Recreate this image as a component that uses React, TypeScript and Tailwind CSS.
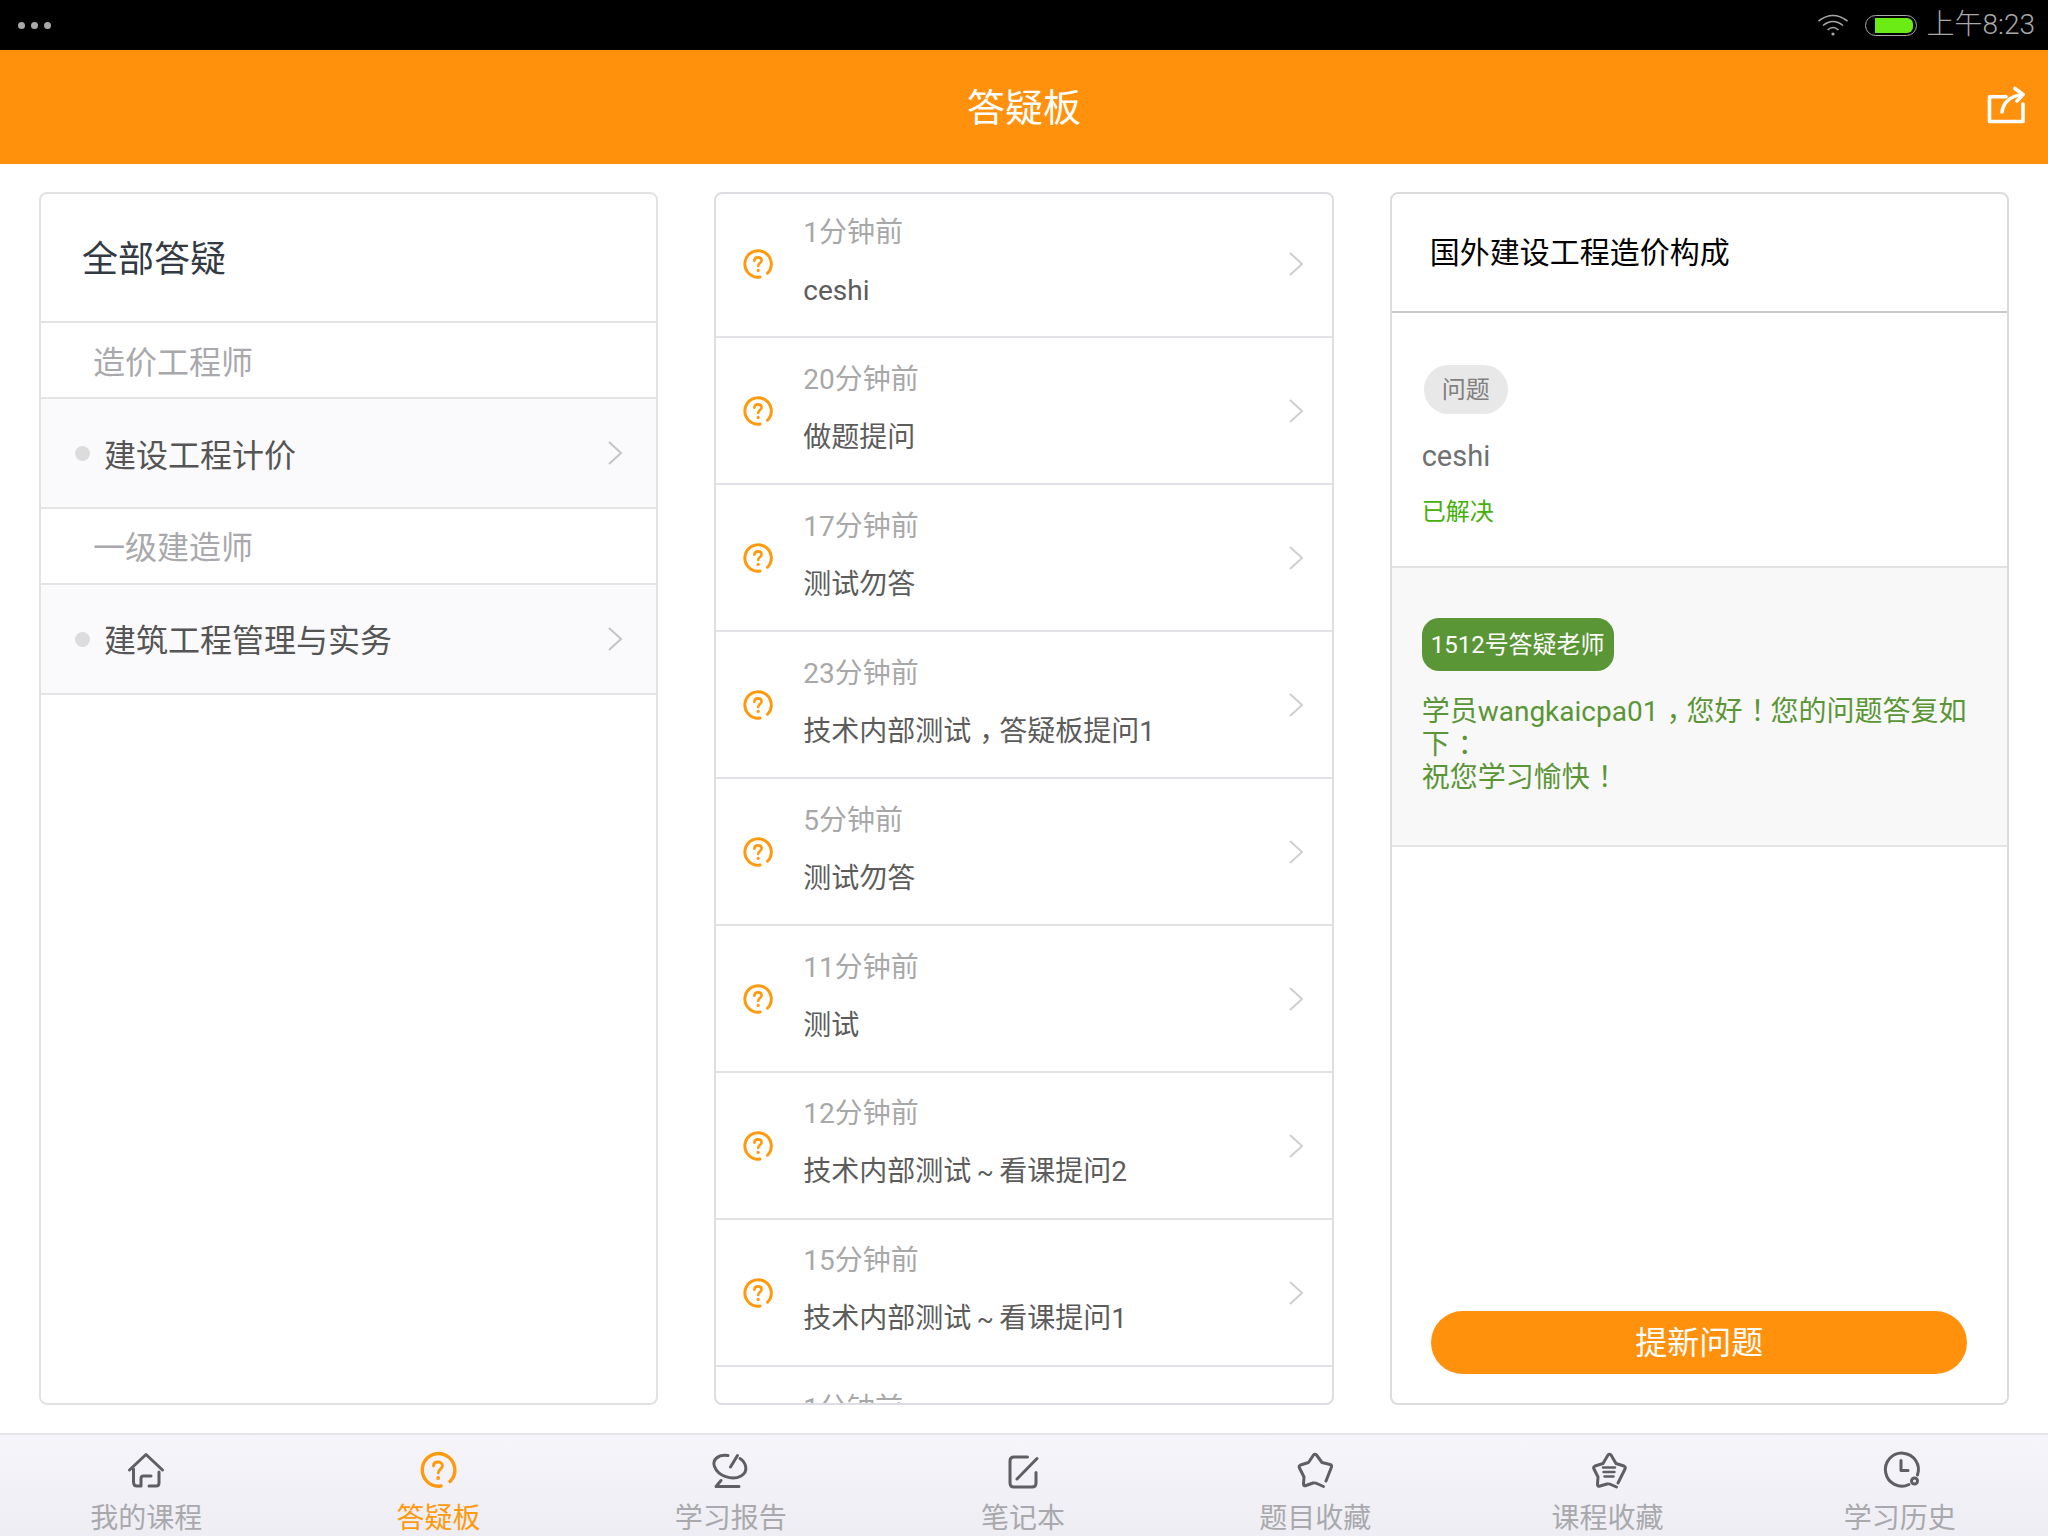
import type { ReactNode } from 'react'

const font = { fontFamily: 'Roboto, "Noto Sans CJK SC", sans-serif' }

// full-width mark centred in its em box, as the tablet's font draws it
function Mark({ children }: { children: string }) {
  return <span className="ml-[8px] tracking-[-8px]">{children}</span>
}

function Tilde() {
  return <span className="inline-block w-[28px] text-center text-[25px]">~</span>
}

const questions: { time: string; title: ReactNode }[] = [
  { time: '1分钟前', title: 'ceshi' },
  { time: '20分钟前', title: '做题提问' },
  { time: '17分钟前', title: '测试勿答' },
  { time: '23分钟前', title: <>技术内部测试<Mark>，</Mark>答疑板提问1</> },
  { time: '5分钟前', title: '测试勿答' },
  { time: '11分钟前', title: '测试' },
  { time: '12分钟前', title: <>技术内部测试<Tilde />看课提问2</> },
  { time: '15分钟前', title: <>技术内部测试<Tilde />看课提问1</> },
  { time: '1分钟前', title: '\u00a0' },
]

function Chevron({ className }: { className: string }) {
  return (
    <svg width="16" height="26" viewBox="0 0 16 26" fill="none" className={className}>
      <path d="M2 2 L14 13 L2 24" stroke="currentColor" strokeWidth="2" />
    </svg>
  )
}

function QuestionIcon({ size, stroke }: { size: number; stroke: number }) {
  return (
    <svg width={size} height={size} viewBox="0 0 30 30" fill="none" className="text-[#ff9a0e] shrink-0">
      <path
        d="M24.5 24.2 A13.2 13.2 0 1 0 17 28"
        stroke="currentColor"
        strokeWidth={stroke}
        strokeLinecap="round"
      />
      <path
        d="M11.4 11.8 C11.4 9.6 13 8.4 15 8.4 C17 8.4 18.6 9.6 18.6 11.4 C18.6 14 15.2 14.2 15.2 17"
        stroke="currentColor"
        strokeWidth="2.6"
        strokeLinecap="round"
      />
      <circle cx="15.2" cy="21.4" r="1.6" fill="currentColor" />
    </svg>
  )
}

function TabIcon({ children }: { children: ReactNode }) {
  return (
    <svg
      width="60"
      height="60"
      viewBox="0 0 60 60"
      fill="none"
      stroke="#5f5f63"
      strokeWidth="3"
      strokeLinecap="round"
      strokeLinejoin="round"
    >
      {children}
    </svg>
  )
}

const tabs: { label: string; active?: boolean; icon: ReactNode }[] = [
  {
    label: '我的课程',
    icon: (
      <TabIcon>
        <path d="M13.5 30 L30 14.5 L46.5 30" />
        <path d="M17.5 29 V42 Q17.5 46 21 46 H25 V38.5 Q25 36 27.5 36 H35" />
        <path d="M33 46 H40 Q43 46 43 43 V32" />
      </TabIcon>
    ),
  },
  {
    label: '答疑板',
    active: true,
    icon: (
      <svg width="60" height="60" viewBox="0 0 60 60" fill="none" className="text-[#ff9a0e]">
        <path
          d="M42 41.5 A16.3 16.3 0 1 0 33 46"
          stroke="currentColor"
          strokeWidth="3.4"
          strokeLinecap="round"
        />
        <path
          d="M25.5 26 C25.5 23.4 27.4 22 30 22 C32.6 22 34.5 23.6 34.5 25.8 C34.5 29 30.2 29.4 30.2 33"
          stroke="currentColor"
          strokeWidth="2.8"
          strokeLinecap="round"
        />
        <circle cx="30.2" cy="38" r="1.9" fill="currentColor" />
      </svg>
    ),
  },
  {
    label: '学习报告',
    icon: (
      <TabIcon>
        <path d="M27 15.5 C17 14 11 20 13.5 26.5 C17 36 31 41 40 36 C48 31.5 45 22.5 39 18.5" />
        <path d="M36.5 15.5 L29.5 27" />
        <path d="M38 46.5 H15 L20 40.5" />
      </TabIcon>
    ),
  },
  {
    label: '笔记本',
    icon: (
      <TabIcon>
        <path d="M34.5 17 H21 Q17 17 17 21 V43 Q17 47 21 47 H39 Q43 47 43 43 V32.5" />
        <path d="M44 18.5 L24 39" />
      </TabIcon>
    ),
  },
  {
    label: '题目收藏',
    icon: (
      <TabIcon>
        <path d="M41 41 L46.5 27 Q47 25 45 24.5 L37 22.5 L31.5 15 Q30 13.5 28.5 15 L23.5 22.5 L15.5 25 Q13.5 26 14.5 28 L19 37 L18.5 44 Q18.5 46.5 21 45.5 L28 43 Q30 42.5 33 44 L38.5 46.5" />
      </TabIcon>
    ),
  },
  {
    label: '课程收藏',
    icon: (
      <TabIcon>
        <path d="M40 43 L47 29 Q48 27 46 26 L38 23.5 L33 15 Q31.5 13.5 30 15 L25 23.5 L17 26 Q15 27 16 29 L20 37 L19.5 44 Q19.5 47 22 46 L29 44 Q31 43.5 34 45 L38.5 47" />
        <path d="M25 27.5 H37" strokeWidth="2.4" />
        <path d="M25.5 32 H36.5" strokeWidth="2.4" />
        <path d="M26.5 36.5 H35.5" strokeWidth="2.4" />
      </TabIcon>
    ),
  },
  {
    label: '学习历史',
    icon: (
      <TabIcon>
        <path d="M39 44.5 A16.5 16.5 0 1 1 47.5 35" />
        <circle cx="44.5" cy="41" r="3" />
        <path d="M31 20.5 V30.5 H38" />
      </TabIcon>
    ),
  },
]

export default function App() {
  return (
    <div className="w-[2048px] h-[1536px] flex flex-col bg-white overflow-hidden" style={font}>
      {/* status bar */}
      <div className="h-[50px] shrink-0 bg-black flex items-center justify-between pl-[18px] pr-[13px]">
        <div className="flex gap-[6px]">
          <span className="w-[7px] h-[7px] rounded-full bg-[#a8a8a8]" />
          <span className="w-[7px] h-[7px] rounded-full bg-[#a8a8a8]" />
          <span className="w-[7px] h-[7px] rounded-full bg-[#a8a8a8]" />
        </div>
        <div className="flex items-center text-[#a8a8a8]">
          <svg width="32" height="24" viewBox="0 0 32 24" fill="none" stroke="currentColor" strokeWidth="1.6">
            <path d="M1.5 8 Q16 -3 30.5 8" />
            <path d="M6 12.5 Q16 4.5 26 12.5" />
            <path d="M10.5 17 Q16 12 21.5 17" />
            <circle cx="16" cy="21" r="1.6" fill="currentColor" stroke="none" />
          </svg>
          <div className="ml-[16px] w-[52px] h-[21px] rounded-full border-[1.5px] border-[#a8a8a8] flex items-center pl-[9px]">
            <div className="w-[38px] h-[15px] bg-[#6aec14] rounded-r-[6px]" />
          </div>
          <span className="ml-[10px] text-[28px] leading-[50px] font-light">上午8:23</span>
        </div>
      </div>

      {/* header */}
      <header className="h-[114px] shrink-0 bg-[#ff910d] relative flex items-center justify-center">
        <h1 className="text-[38px] text-white font-normal pt-[2px]">答疑板</h1>
        <svg
          width="40"
          height="40"
          viewBox="0 0 40 40"
          fill="none"
          stroke="white"
          strokeWidth="3.6"
          strokeLinecap="round"
          strokeLinejoin="round"
          className="absolute right-[22px] top-[36px]"
        >
          <path d="M20 10.7 H3.5 V35.5 H37 V18" />
          <path d="M16 26 C17 17 24 10 35 9" />
          <path d="M29 2.5 L37 8.5 L31 15" />
        </svg>
      </header>

      {/* panels */}
      <main className="flex-1 min-h-0 grid grid-cols-3 gap-[56px] px-[39px] pt-[28px] pb-[28px]">
        <section className="border-2 border-[#e2e2e2] rounded-[8px] overflow-hidden flex flex-col">
          <div className="h-[129px] shrink-0 flex items-center pl-[41px] pt-[5px] text-[36px] text-[#333a44] border-b-2 border-[#e4e4e4]">
            全部答疑
          </div>
          <div className="h-[76px] shrink-0 flex items-center pl-[52px] pt-[5px] text-[32px] text-[#a9a9ad] border-b-2 border-[#e4e4e4]">
            造价工程师
          </div>
          <div className="h-[110px] shrink-0 flex items-center pl-[34px] bg-[#fafafc] border-b-2 border-[#e4e4e4]">
            <span className="w-[15px] h-[15px] rounded-full bg-[#dcdcdc]" />
            <span className="ml-[14px] flex-1 pt-[5px] text-[32px] text-[#555555]">建设工程计价</span>
            <Chevron className="text-[#c4c4c4] mr-[33px]" />
          </div>
          <div className="h-[76px] shrink-0 flex items-center pl-[52px] pt-[3px] text-[32px] text-[#a9a9ad] border-b-2 border-[#e4e4e4]">
            一级建造师
          </div>
          <div className="h-[110px] shrink-0 flex items-center pl-[34px] bg-[#fafafc] border-b-2 border-[#e4e4e4]">
            <span className="w-[15px] h-[15px] rounded-full bg-[#dcdcdc]" />
            <span className="ml-[14px] flex-1 pt-[3px] text-[32px] text-[#555555]">建筑工程管理与实务</span>
            <Chevron className="text-[#c4c4c4] mr-[33px]" />
          </div>
        </section>

        <section className="border-2 border-[#dcdee2] rounded-[8px] overflow-hidden">
          <div className="-mt-[3px]">
            {questions.map((q, i) => (
              <div
                key={i}
                className="h-[147px] flex items-center pl-[27px] pr-[28px] border-b-2 border-[#e0e2e6]"
              >
                <QuestionIcon size={30} stroke={3} />
                <div className="ml-[30px] flex-1 flex flex-col gap-[22px] mb-[4px]">
                  <span className="text-[28px] leading-[36px] text-[#a8a8a8]">{q.time}</span>
                  <span className="text-[28px] leading-[36px] text-[#5c5c5c]">{q.title}</span>
                </div>
                <Chevron className="text-[#cfcfcf]" />
              </div>
            ))}
          </div>
        </section>

        <section className="border-2 border-[#dcdcdc] rounded-[8px] overflow-hidden flex flex-col">
          <div className="h-[119px] shrink-0 flex items-center pl-[38px] pb-[1px] text-[30px] text-black border-b-2 border-[#c9c9c9]">
            国外建设工程造价构成
          </div>
          <div className="h-[255px] shrink-0 pl-[30px] pt-[52px] border-b-2 border-[#e2e2e2]">
            <div className="ml-[2px] w-[84px] h-[49px] rounded-full bg-[#e8e8e8] flex items-center justify-center text-[24px] text-[#808080]">
              问题
            </div>
            <p className="mt-[23px] text-[29px] leading-[38px] text-[#707070]">ceshi</p>
            <p className="mt-[21px] text-[24px] leading-[32px] text-[#45b00a]">已解决</p>
          </div>
          <div className="h-[279px] shrink-0 bg-[#f8f8f8] pl-[30px] pr-[38px] pt-[50px] border-b-2 border-[#e4e4e4]">
            <div className="w-[192px] h-[53px] rounded-[17px] bg-[#5a9636] flex items-center justify-center text-[24px] text-white">
              1512号答疑老师
            </div>
            <p className="mt-[24px] text-[28px] leading-[33px] text-[#5a9636]">
              学员wangkaicpa01<Mark>，</Mark>您好<Mark>！</Mark>您的问题答复如下<Mark>：</Mark>
              <br />
              祝您学习愉快<Mark>！</Mark>
            </p>
          </div>
          <div className="flex-1 flex items-end justify-center pb-[29px]">
            <button className="w-[536px] h-[63px] rounded-full bg-[#ff910d] text-white text-[32px]">提新问题</button>
          </div>
        </section>
      </main>

      {/* tab bar */}
      <nav className="h-[103px] shrink-0 grid grid-cols-7 pr-[2px] border-t-2 border-[#e4e3ee] bg-gradient-to-b from-[#f6f5fa] to-[#eeedf3]">
        {tabs.map((t) => (
          <div key={t.label} className="flex flex-col items-center pt-[5px]">
            {t.icon}
            <span
              className={
                t.active
                  ? 'text-[28px] leading-[34px] mt-[2px] text-[#ff9a0e]'
                  : 'text-[28px] leading-[34px] mt-[2px] text-[#a9a9ad]'
              }
            >
              {t.label}
            </span>
          </div>
        ))}
      </nav>
    </div>
  )
}
